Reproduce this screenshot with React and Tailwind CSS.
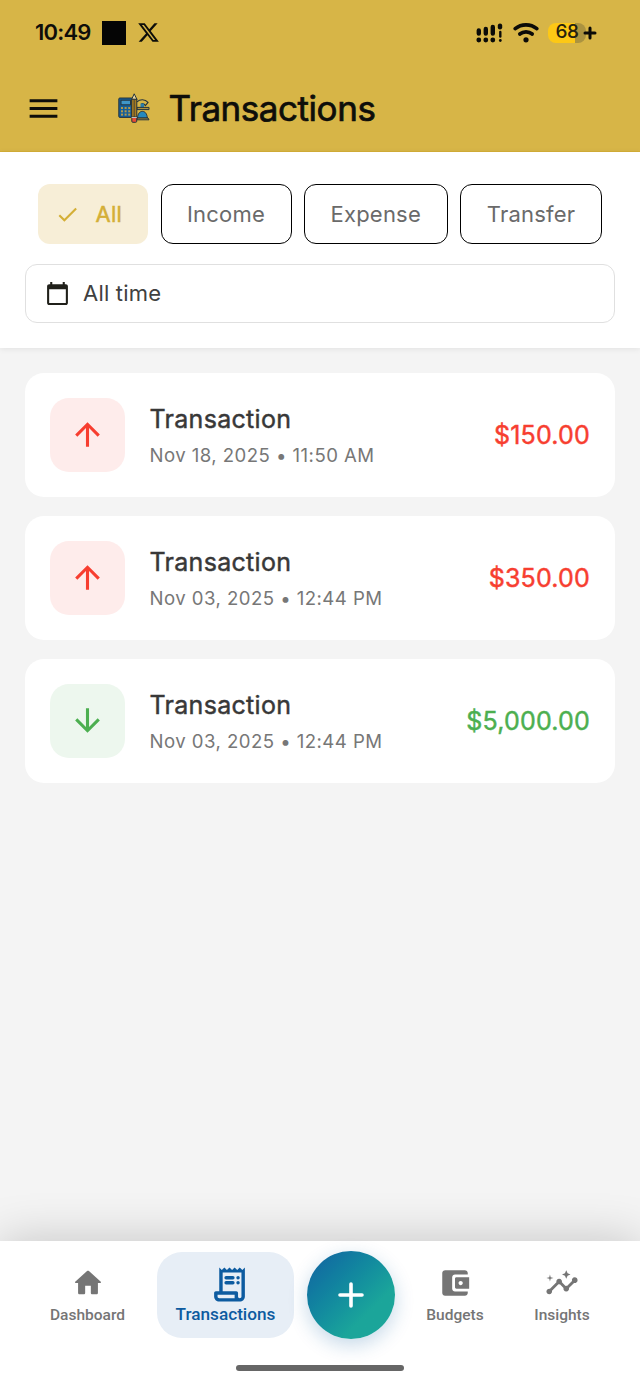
import React from 'react';
import { MdArrowDownward, MdArrowUpward, MdCheck, MdInsights, MdMenu } from 'react-icons/md';
import { FaXTwitter } from 'react-icons/fa6';

const transactions = [
    { id: 1, date: 'Nov 18, 2025 • 11:50 AM', amount: '$150.00', type: 'expense' },
    { id: 2, date: 'Nov 03, 2025 • 12:44 PM', amount: '$350.00', type: 'expense' },
    { id: 3, date: 'Nov 03, 2025 • 12:44 PM', amount: '$5,000.00', type: 'income' },
];

const filters = [
    { label: 'Income', width: 'w-[131px]' },
    { label: 'Expense', width: 'w-[143.5px]' },
    { label: 'Transfer', width: 'w-[142px]' },
];

function SignalIcon() {
    return (
        <svg width="28" height="20" viewBox="0 0 28 20" stroke="#0b0b08" strokeLinecap="round" fill="#0b0b08">
            <path d="M2.8 7.5v3M9.8 6v4.5M16.8 4v6.5" strokeWidth="4.4" />
            <path d="M24 2.6v1.6" strokeWidth="4.4" />
            <path d="M24.3 9v4.5" strokeWidth="2.4" />
            <g stroke="none">
                <circle cx="2.8" cy="17" r="2.4" />
                <circle cx="9.8" cy="17" r="2.4" />
                <circle cx="16.8" cy="17" r="2.4" />
                <circle cx="24.3" cy="17.5" r="1.4" />
            </g>
        </svg>
    );
}

function WifiIcon() {
    return (
        <svg width="26" height="20" viewBox="0 0 26 20" fill="none" stroke="#0b0b08" strokeWidth="3.6" strokeLinecap="round">
            <path d="M2.2 5.7C8.4 .6 17.6 .6 23.8 5.7" />
            <path d="M6.8 11c3.6-2.9 8.8-2.9 12.4 0" />
            <circle cx="13" cy="16.8" r="2.6" fill="#0b0b08" stroke="none" />
        </svg>
    );
}

function Logo() {
    return (
        <svg width="32" height="30" viewBox="0 0 32 30" stroke="#26343c" strokeWidth="1">
            <rect x="0.8" y="5" width="14" height="19.4" rx="1" fill="#155f99" />
            <rect x="3" y="7.2" width="9.5" height="4.6" fill="#3f97c9" />
            <g fill="#b39a4c" stroke="none">
                <rect x="3" y="14" width="2" height="2" />
                <rect x="6.6" y="14" width="2" height="2" />
                <rect x="10.2" y="14" width="2" height="2" />
                <rect x="3" y="17.3" width="2" height="2" />
                <rect x="6.6" y="17.3" width="2" height="2" />
                <rect x="10.2" y="17.3" width="2" height="2" />
                <rect x="3" y="20.6" width="2" height="2" />
                <rect x="6.6" y="20.6" width="2" height="2" />
                <rect x="10.2" y="20.6" width="2" height="2" />
            </g>
            <path d="M19 8.8c3-2.8 8-2.8 11 .6l-2.6 3.2c-1-1.6-2.4-2.2-4-2" fill="none" strokeWidth="1.1" />
            <path d="M22.5 10.5h3.5v4h-3.5z" fill="#2b7fad" stroke="none" />
            <path d="M19 14.4h12v2.2H19z" fill="#ad9140" />
            <path d="M19.4 25c.5-4 2-6.6 5-6.6s4.5 2.6 5 6.6z" fill="#2588bd" />
            <path d="M19 25h11l1 1.8H19z" fill="#ad9140" />
            <path d="M13.6 6.5 16.2.8l2.8 5.7z" fill="#ead6a0" />
            <rect x="13.6" y="6.2" width="5.2" height="18" fill="#a77b20" />
            <path d="M16.2 7v17" strokeWidth=".7" />
            <rect x="13.8" y="24.3" width="4.9" height="5" rx="1" fill="#e94b35" />
            <path d="M13.6 24.5h5.2" stroke="#b9c2c4" />
        </svg>
    );
}

function CalendarIcon() {
    return (
        <svg width="25" height="25" viewBox="0 0 24 24" fill="#20201a">
            <path d="M20 3h-1V1h-2v2H7V1H5v2H4c-1.1 0-2 .9-2 2v16c0 1.1.9 2 2 2h16c1.1 0 2-.9 2-2V5c0-1.1-.9-2-2-2zm0 18H4V8h16v13z" />
        </svg>
    );
}

function HomeIcon() {
    return (
        <svg width="34" height="34" viewBox="0 0 24 24" fill="currentColor">
            <path d="M10 19v-5h4v5c0 .55.45 1 1 1h3c.55 0 1-.45 1-1v-7h1.7c.46 0 .68-.57.33-.87L12.67 3.6c-.38-.34-.96-.34-1.34 0l-8.36 7.53c-.34.3-.13.87.33.87H5v7c0 .55.45 1 1 1h3c.55 0 1-.45 1-1z" />
        </svg>
    );
}

function ReceiptIcon() {
    return (
        <svg width="41" height="41" viewBox="0 0 24 24" fill="currentColor">
            <path d="M19.5 3.5 18 2l-1.5 1.5L15 2l-1.5 1.5L12 2l-1.5 1.5L9 2 7.5 3.5 6 2v14H4c-.55 0-1 .45-1 1v2c0 1.66 1.34 3 3 3h12c1.66 0 3-1.34 3-3V2l-1.5 1.5zM15 20H6c-.55 0-1-.45-1-1v-1h10v2zm4-1c0 .55-.45 1-1 1s-1-.45-1-1v-2c0-.55-.45-1-1-1H8V5h11v14z" />
            <path d="M10 8h4M10 11h4" stroke="currentColor" strokeWidth="2" strokeLinecap="round" />
            <circle cx="17" cy="8" r="1" />
            <circle cx="17" cy="11" r="1" />
        </svg>
    );
}

function WalletIcon() {
    return (
        <svg width="34" height="34" viewBox="0 0 24 24" fill="currentColor">
            <path d="M10 16V8c0-1.1.89-2 2-2h9V5c0-1.1-.9-2-2-2H5c-1.11 0-2 .9-2 2v14c0 1.1.89 2 2 2h14c1.1 0 2-.9 2-2v-1h-9c-1.11 0-2-.9-2-2zm3-8c-.55 0-1 .45-1 1v6c0 .55.45 1 1 1h9V8h-9zm3 5.5c-.83 0-1.5-.67-1.5-1.5s.67-1.5 1.5-1.5 1.5.67 1.5 1.5-.67 1.5-1.5 1.5z" />
        </svg>
    );
}

function TransactionCard({ date, amount, type }) {
    const income = type === 'income';
    return (
        <div className="flex h-[124px] items-center rounded-[19px] bg-white px-[25px]">
            <div className={`flex size-[74.5px] items-center justify-center rounded-[19px] pb-[1.5px] ${income ? 'bg-[#edf7ee] text-[#4caf50]' : 'bg-[#feeceb] text-[#f73e30]'}`}>
                {income ? <MdArrowDownward size={37} /> : <MdArrowUpward size={37} />}
            </div>
            <div className="ml-[25px] flex-1 pt-[3px] whitespace-nowrap">
                <div className="text-[25px] leading-[36px] tracking-[0.3px] text-[#383838] [-webkit-text-stroke:0.45px]">Transaction</div>
                <div className="text-[18.6px] leading-[36px] tracking-[0.45px] text-[#777]">{date}</div>
            </div>
            <div className={`pt-[2px] text-[25px] tracking-[0.2px] [-webkit-text-stroke:0.45px] ${income ? 'text-[#4caf50]' : 'text-[#f73e30]'}`}>{amount}</div>
        </div>
    );
}

function NavItem({ icon, label, width }) {
    return (
        <div className={`flex flex-col items-center pt-[25px] text-[#757575] ${width}`}>
            {icon}
            <span className="mt-[3px] text-[15.5px] leading-[24px] font-medium">{label}</span>
        </div>
    );
}

export default function App() {
    return (
        <div className="flex h-[1387px] w-[640px] flex-col overflow-hidden bg-[#f4f4f4] font-['Inter',sans-serif]">
            <header className="h-[152px] shrink-0 border-b border-[#d4af37] bg-[#d7b547] text-[#0e0e0a]">
                {/* Status bar */}
                <div className="flex h-[65px] items-center pr-[43px] pl-[35px]">
                    <span className="w-[67px] text-[22px] font-semibold tracking-[-0.8px]">10:49</span>
                    <span className="size-6 bg-[#050505]" />
                    <FaXTwitter size={23} className="ml-[11px]" />
                    <div className="ml-auto flex items-center">
                        <SignalIcon />
                        <span className="ml-[9px] flex"><WifiIcon /></span>
                        <span className="ml-[9px] flex h-5 w-[38px] items-center justify-center rounded-[8px] bg-linear-to-r from-[#fdc815] from-70% to-[#ab9340] to-70% text-[19px] font-medium tracking-[-0.5px] text-[#26220e]">68</span>
                        <svg width="14" height="14" viewBox="0 0 14 14" className="-ml-[3px]" stroke="#0b0b08" strokeWidth="3" strokeLinecap="round">
                            <path d="M7 2v10M2 7h10" />
                        </svg>
                    </div>
                </div>
                <div className="flex h-[86px] items-center pl-[25px]">
                    <MdMenu size={37} />
                    <div className="ml-[56px]"><Logo /></div>
                    <h1 className="ml-[18.5px] pt-px text-[35px] tracking-[-0.45px] [-webkit-text-stroke:0.7px]">Transactions</h1>
                </div>
            </header>

            <section className="flex h-[196px] shrink-0 flex-col gap-[20px] bg-white px-[25px] pt-[32px] shadow-[0_1px_6px_rgba(0,0,0,0.08)]">
                <div className="flex h-[60px] gap-[12.5px] pl-[13px] text-[22px] tracking-[0.2px]">
                    <div className="flex w-[110px] items-center rounded-[12px] bg-[#f7eed7] pl-[17px] text-[#d4af37]">
                        <MdCheck size={25} />
                        <span className="ml-[15.5px] [-webkit-text-stroke:0.5px]">All</span>
                    </div>
                    {filters.map((f) => (
                        <div key={f.label} className={`flex items-center justify-center rounded-[12px] border-[1.5px] border-black text-[#6a6a6a] ${f.width}`}>
                            {f.label}
                        </div>
                    ))}
                </div>
                <div className="flex h-[59px] items-center rounded-[12px] border-[1.5px] border-[#e0e0e0] pl-[19px]">
                    <CalendarIcon />
                    <span className="ml-[13px] text-[22px] tracking-[0.2px] text-[#404040]">All time</span>
                </div>
            </section>

            <main className="flex flex-1 flex-col gap-[19px] px-[25px] pt-[25px]">
                {transactions.map((t) => (
                    <TransactionCard key={t.id} {...t} />
                ))}
            </main>

            <nav className="h-[146px] shrink-0 bg-white font-['Roboto',sans-serif] shadow-[0_0_46px_rgba(0,0,0,0.2)]">
                <div className="flex h-[124px] items-start pl-[18px]">
                    <NavItem icon={<HomeIcon />} label="Dashboard" width="w-[139px]" />
                    <div className="mt-[11px] flex h-[86px] w-[137px] flex-col items-center rounded-[25px] bg-[#e7eef6] pt-[12px] text-[#0d5ba0]">
                        <span className="ml-[7px] flex"><ReceiptIcon /></span>
                        <span className="-mt-[3px] text-[17.2px] leading-[24px] font-medium">Transactions</span>
                    </div>
                    <button className="mt-[10px] ml-[13px] flex size-[88px] items-center justify-center rounded-full bg-linear-to-br from-[#126ca1] from-12% to-[#1ba59a] to-70% shadow-[0_6px_19px_rgba(13,91,160,0.24)]">
                        <svg width="26" height="26" viewBox="0 0 26 26" stroke="white" strokeWidth="3.6" strokeLinecap="round">
                            <path d="M13 2v22M2 13h22" />
                        </svg>
                    </button>
                    <NavItem icon={<WalletIcon />} label="Budgets" width="ml-[6px] w-[108px]" />
                    <NavItem icon={<MdInsights size={34} />} label="Insights" width="w-[106px]" />
                </div>
                <div className="mx-auto h-[6px] w-[168px] rounded-full bg-[#666]" />
            </nav>
        </div>
    );
}
